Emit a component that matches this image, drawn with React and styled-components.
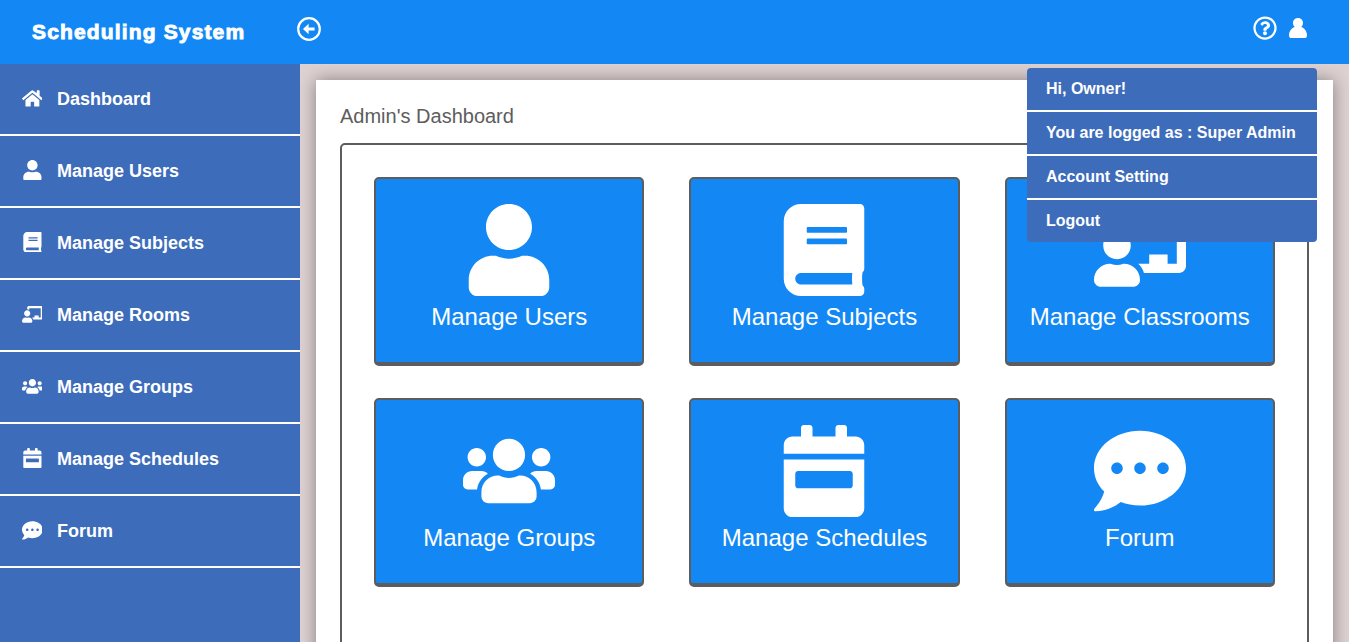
import React from 'react';
import styled, { createGlobalStyle } from 'styled-components';
import {
  FaHome, FaUser, FaBook, FaChalkboardTeacher, FaUsers, FaCalendarWeek, FaCommentDots, FaRegQuestionCircle,
} from 'react-icons/fa';

const GlobalStyle = createGlobalStyle`
  * { box-sizing: border-box; }
  body {
    margin: 0;
    overflow: hidden;
    background: #ddd2d1;
    font-family: "Liberation Sans", Arial, sans-serif;
  }
`;

const Page = styled.div`
  height: 100vh;
  display: flex;
  flex-direction: column;
`;

const Header = styled.header`
  position: relative;
  z-index: 2;
  flex: none;
  height: 64px;
  display: flex;
  align-items: center;
  padding: 0 42px 0 32px;
  background: #1388f5;
  color: #fff;
`;

const Brand = styled.div`
  width: 265px;
  padding-top: 0;
  font-size: 21px;
  line-height: 24px;
  font-weight: 700;
  letter-spacing: 1.15px;
  white-space: nowrap;
  -webkit-text-stroke: 0.9px #fff;
`;

const BackButton = styled.a`
  display: flex;
  margin-bottom: 6px;
`;

const HeaderActions = styled.div`
  margin: 0 0 8px auto;
  display: flex;
  align-items: center;
  gap: 12px;
`;

const Body = styled.div`
  flex: 1;
  min-height: 0;
  display: flex;
`;

const Sidebar = styled.nav`
  flex: none;
  width: 300px;
  background: #3d6cbb;
`;

const SideLink = styled.a`
  display: flex;
  align-items: center;
  height: 72px;
  padding-left: 19px;
  border-bottom: 2px solid #fff;
  color: #fff;
  font-size: 18px;
  font-weight: 700;
  white-space: nowrap;
`;

const SideIcon = styled.span`
  display: flex;
  justify-content: center;
  width: 26px;
  margin: 0 12px 2px 0;
  svg { height: 20.8px; width: auto; flex: none; }
`;

const Main = styled.main`
  flex: 1;
  min-width: 0;
  padding: 16px 16px 0;
  overflow: hidden;
`;

const Panel = styled.section`
  height: 900px;
  padding: 24px;
  background: #fff;
  box-shadow: 0 0 16px rgba(0, 0, 0, 0.4);
  overflow: hidden;
`;

const Heading = styled.h1`
  margin: 0 0 15px;
  font-size: 20px;
  line-height: 24px;
  font-weight: 400;
  color: #5d5d5d;
`;

const TileBox = styled.div`
  height: 800px;
  display: grid;
  grid-template-columns: repeat(3, 270.4px);
  grid-auto-rows: 189px;
  justify-content: space-between;
  align-content: start;
  row-gap: 32px;
  padding: 32px;
  border: 2px solid #5d5d5d;
  border-radius: 5px;
`;

const Tile = styled.a`
  display: flex;
  flex-direction: column;
  align-items: center;
  padding-top: 25px;
  border: 2px solid #5d5d5d;
  border-bottom-width: 4px;
  border-radius: 5px;
  background: #1388f5;
  color: #fff;
  font-size: 24px;
  line-height: 28px;
  white-space: nowrap;
  svg { height: 92px; width: auto; margin-bottom: 7px; flex: none; }
`;

const AccountMenu = styled.div`
  position: absolute;
  top: 68px;
  right: 32px;
  width: 290px;
  border-radius: 4px;
  overflow: hidden;
  background: #3d6cbb;
`;

const MenuItem = styled.div`
  height: 44px;
  padding: 0 19px;
  line-height: 42px;
  font-size: 16px;
  font-weight: 700;
  white-space: nowrap;
  border-bottom: 2px solid #fff;
  &:last-child { height: 42px; border-bottom: 0; }
`;

const BackIcon = () => (
  <svg width="24" height="24" viewBox="0 0 24 24" fill="none">
    <circle cx="12" cy="12" r="10.8" stroke="#fff" strokeWidth="2.2" />
    <path d="M6 12 11.6 6.8V10.5H17.6V13.5H11.6V17.2Z" fill="#fff" />
  </svg>
);

const PersonIcon = () => (
  <svg width="18" height="20" viewBox="0 0 18 20" fill="#fff">
    <path d="M9 0C12 0 14 2.2 14 5.1 14 6.8 13.3 8 12.3 9 15.9 10.3 18 13.6 18 17.4 18 19 17 20 15.6 20H2.4C1 20 0 19 0 17.4 0 13.6 2.1 10.3 5.7 9 4.7 8 4 6.8 4 5.1 4 2.2 6 0 9 0Z" />
  </svg>
);

const links = [
  [FaHome, 'Dashboard'],
  [FaUser, 'Manage Users'],
  [FaBook, 'Manage Subjects'],
  [FaChalkboardTeacher, 'Manage Rooms'],
  [FaUsers, 'Manage Groups'],
  [FaCalendarWeek, 'Manage Schedules'],
  [FaCommentDots, 'Forum'],
];

const tiles = [
  [FaUser, 'Manage Users'],
  [FaBook, 'Manage Subjects'],
  [FaChalkboardTeacher, 'Manage Classrooms'],
  [FaUsers, 'Manage Groups'],
  [FaCalendarWeek, 'Manage Schedules'],
  [FaCommentDots, 'Forum'],
];

const menu = ['Hi, Owner!', 'You are logged as : Super Admin', 'Account Setting', 'Logout'];

export default function App() {
  return (
    <Page>
      <GlobalStyle />
      <Header>
        <Brand>Scheduling System</Brand>
        <BackButton><BackIcon /></BackButton>
        <HeaderActions>
          <FaRegQuestionCircle size={24} />
          <PersonIcon />
        </HeaderActions>
        <AccountMenu>
          {menu.map((text) => <MenuItem key={text}>{text}</MenuItem>)}
        </AccountMenu>
      </Header>
      <Body>
        <Sidebar>
          {links.map(([Icon, text]) => (
            <SideLink key={text}><SideIcon><Icon /></SideIcon>{text}</SideLink>
          ))}
        </Sidebar>
        <Main>
          <Panel>
            <Heading>Admin's Dashboard</Heading>
            <TileBox>
              {tiles.map(([Icon, text]) => <Tile key={text}><Icon />{text}</Tile>)}
            </TileBox>
          </Panel>
        </Main>
      </Body>
    </Page>
  );
}
